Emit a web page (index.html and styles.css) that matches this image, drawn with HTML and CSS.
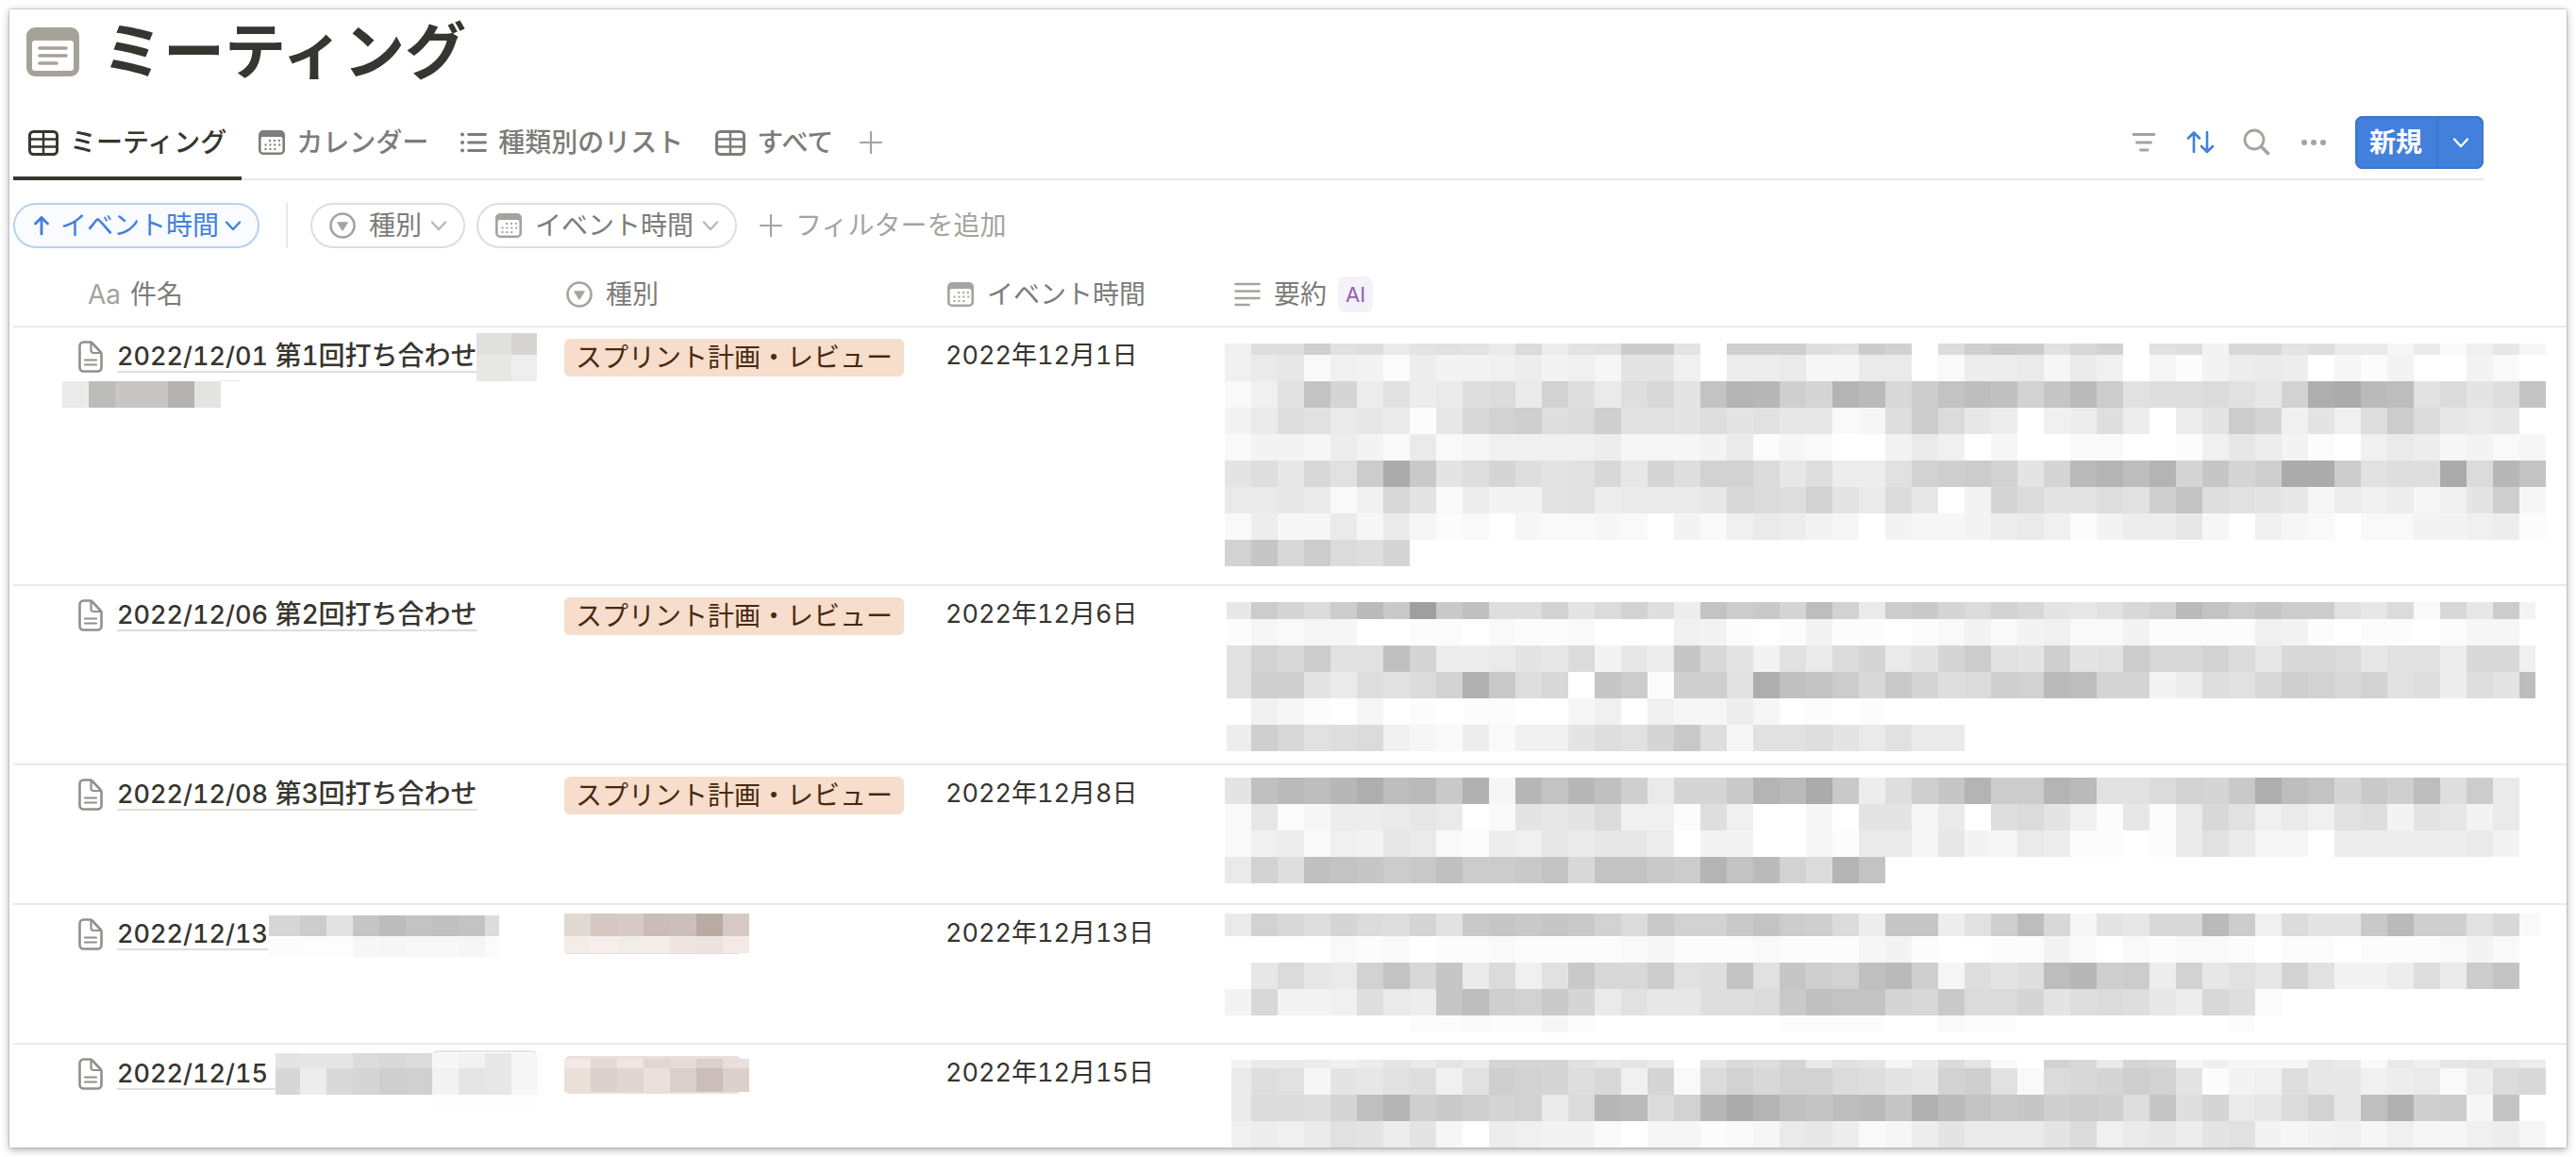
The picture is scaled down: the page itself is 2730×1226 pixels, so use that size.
FILE: index.html
```html
<!DOCTYPE html>
<html lang="ja">
<head>
<meta charset="utf-8">
<meta name="viewport" content="width=device-width, initial-scale=1">
<title>ミーティング</title>
<link rel="stylesheet" href="styles.css">
</head>
<body>
<svg class="defs" aria-hidden="true">
  <symbol id="i-table" viewBox="0 0 32 28">
    <rect x="1.5" y="2.5" width="29" height="24" rx="4" fill="none" stroke="currentColor" stroke-width="3"/>
    <path d="M2 10.5h28M2 18.5h28M16 3v23" fill="none" stroke="currentColor" stroke-width="2.4"/>
  </symbol>
  <symbol id="i-calendar" viewBox="0 0 28 28">
    <path fill="currentColor" fill-rule="evenodd" d="M5 1h18a5 5 0 0 1 5 5v16a5 5 0 0 1-5 5H5a5 5 0 0 1-5-5V6a5 5 0 0 1 5-5zM2.600 10v12a2.600 2.600 0 0 0 2.600 2.600h17.600a2.600 2.600 0 0 0 2.600-2.600V10a2 2 0 0 0-2-2H4.600a2 2 0 0 0-2 2z"/>
    <path d="M11 12h13M6.500 16.500h17M6.500 21h12.500" stroke="currentColor" stroke-width="2.200" stroke-dasharray="2 2.900" fill="none"/>
  </symbol>
  <symbol id="i-list" viewBox="0 0 28 28">
    <circle cx="2" cy="5.500" r="2" fill="currentColor"/><circle cx="2" cy="14" r="2" fill="currentColor"/><circle cx="2" cy="22.500" r="2" fill="currentColor"/>
    <path d="M8.500 5.500h18M8.500 14h18M8.500 22.500h18" stroke="currentColor" stroke-width="2.800" stroke-linecap="round"/>
  </symbol>
  <symbol id="i-plus" viewBox="0 0 24 24">
    <path d="M12 1v22M1 12h22" stroke="currentColor" stroke-width="2.200" stroke-linecap="round"/>
  </symbol>
  <symbol id="i-select" viewBox="0 0 28 28">
    <circle cx="14" cy="14" r="12.500" fill="none" stroke="currentColor" stroke-width="2.600"/>
    <path d="M8.800 10.200h10.400a.6.6 0 0 1 .5.9l-5 8.200a.8.8 0 0 1-1.400 0l-5-8.200a.6.6 0 0 1 .5-.9z" fill="currentColor"/>
  </symbol>
  <symbol id="i-chevron" viewBox="0 0 18 18">
    <path d="M2 5.500l7 7.500 7-7.500" fill="none" stroke="currentColor" stroke-width="2.400" stroke-linecap="round" stroke-linejoin="round"/>
  </symbol>
  <symbol id="i-page" viewBox="0 0 26 34">
    <path d="M5 1.500h7.500a3 3 0 0 1 2.200 1L23.600 12a3 3 0 0 1 .9 2.200V28.500a4 4 0 0 1-4 4H5.500a4 4 0 0 1-4-4V5.500a4 4 0 0 1 4-4z" fill="none" stroke="currentColor" stroke-width="2.600"/>
    <path d="M13.500 2v8.500a2.500 2.500 0 0 0 2.500 2.500h8M7 20.500h12M7 25.500h12" fill="none" stroke="currentColor" stroke-width="2.200" stroke-linecap="round"/>
  </symbol>
</svg>

<main class="frame">
  <header class="page-title">
    <svg class="page-icon" viewBox="0 0 56 52" aria-hidden="true">
      <path fill="#a5a299" fill-rule="evenodd" d="M9 0h38a9 9 0 0 1 9 9v34a9 9 0 0 1-9 9H9a9 9 0 0 1-9-9V9a9 9 0 0 1 9-9zM6 17v26a3 3 0 0 0 3 3h38a3 3 0 0 0 3-3V17a3 3 0 0 0-3-3H9a3 3 0 0 0-3 3z"/>
      <path d="M14 22h28M14 30h28M14 38h18" stroke="#a5a299" stroke-width="3.600" stroke-linecap="round"/>
    </svg>
    <h1>ミーティング</h1>
  </header>

  <div class="viewbar">
    <nav class="tabs">
      <a class="tab tab-active" href="#" aria-current="page"><svg class="w32"><use href="#i-table"/></svg>ミーティング</a>
      <a class="tab" href="#"><svg class="w28"><use href="#i-calendar"/></svg>カレンダー</a>
      <a class="tab" href="#"><svg class="w28"><use href="#i-list"/></svg>種類別のリスト</a>
      <a class="tab" href="#"><svg class="w32"><use href="#i-table"/></svg>すべて</a>
      <button class="add-tab" type="button" aria-label="ビューを追加"><svg class="w24"><use href="#i-plus"/></svg></button>
    </nav>
    <div class="tools">
      <button class="tool" type="button" aria-label="フィルター"><svg viewBox="0 0 32 32"><path d="M5 7.500h22M8.500 16h15M12.500 24h7.500" stroke="currentColor" stroke-width="2.800" stroke-linecap="round"/></svg></button>
      <button class="tool tool-on" type="button" aria-label="並べ替え"><svg viewBox="0 0 32 32"><path d="M9 26V5.500M3 11.500l6-6 6 6M23 5v21M17 20l6 6 6-6" fill="none" stroke="currentColor" stroke-width="2.600" stroke-linecap="round" stroke-linejoin="round"/></svg></button>
      <button class="tool" type="button" aria-label="検索"><svg viewBox="0 0 32 32"><circle cx="13" cy="13" r="10" fill="none" stroke="currentColor" stroke-width="2.800"/><path d="M20.500 20.500l7 7" stroke="currentColor" stroke-width="3.600" stroke-linecap="round"/></svg></button>
      <button class="tool" type="button" aria-label="その他"><svg viewBox="0 0 32 32"><g fill="currentColor"><circle cx="6" cy="16" r="3"/><circle cx="16" cy="16" r="3"/><circle cx="26" cy="16" r="3"/></g></svg></button>
      <div class="new">
        <button class="new-main" type="button">新規</button>
        <button class="new-more" type="button" aria-label="テンプレート"><svg class="w18"><use href="#i-chevron"/></svg></button>
      </div>
    </div>
  </div>

  <div class="filters">
    <button class="pill pill-sort" type="button"><svg class="arrow" viewBox="0 0 16 22"><path d="M8 20V2.500M1.500 9L8 2.500 14.500 9" fill="none" stroke="currentColor" stroke-width="2.800" stroke-linecap="round" stroke-linejoin="round"/></svg>イベント時間<svg class="w18 chev"><use href="#i-chevron"/></svg></button>
    <span class="rule"></span>
    <button class="pill" type="button"><svg class="w28 kind"><use href="#i-select"/></svg>種別<svg class="w18 chev"><use href="#i-chevron"/></svg></button>
    <button class="pill" type="button"><svg class="w28 kind"><use href="#i-calendar"/></svg>イベント時間<svg class="w18 chev"><use href="#i-chevron"/></svg></button>
    <button class="add-filter" type="button"><svg class="w24"><use href="#i-plus"/></svg>フィルターを追加</button>
  </div>

  <table class="db">
    <colgroup><col class="c-name"><col class="c-type"><col class="c-date"><col></colgroup>
    <thead>
      <tr>
        <th class="h-name"><span class="head"><span class="aa">Aa</span>件名</span></th>
        <th class="h-type"><span class="head"><svg class="w28"><use href="#i-select"/></svg>種別</span></th>
        <th class="h-date"><span class="head"><svg class="w28"><use href="#i-calendar"/></svg>イベント時間</span></th>
        <th class="h-sum"><span class="head"><svg class="w28" viewBox="0 0 28 28"><path d="M1.500 3h25M1.500 10.500h25M1.500 18h25M1.500 25h14" stroke="currentColor" stroke-width="2.600" stroke-linecap="round"/></svg>要約<span class="ai">AI</span></span></th>
      </tr>
    </thead>
    <tbody>
      <tr>
        <td class="name"><svg class="page"><use href="#i-page"/></svg><a href="#"><time>2022/12/01</time> 第1回打ち合わせ</a><svg class="mask" data-mask="name1"></svg></td>
        <td><span class="tag">スプリント計画・レビュー</span></td>
        <td class="date">2022年12月1日</td>
        <td><svg class="mosaic" data-mosaic="0"></svg></td>
      </tr>
      <tr>
        <td class="name"><svg class="page"><use href="#i-page"/></svg><a href="#"><time>2022/12/06</time> 第2回打ち合わせ</a></td>
        <td><span class="tag">スプリント計画・レビュー</span></td>
        <td class="date">2022年12月6日</td>
        <td><svg class="mosaic" data-mosaic="1"></svg></td>
      </tr>
      <tr>
        <td class="name"><svg class="page"><use href="#i-page"/></svg><a href="#"><time>2022/12/08</time> 第3回打ち合わせ</a></td>
        <td><span class="tag">スプリント計画・レビュー</span></td>
        <td class="date">2022年12月8日</td>
        <td><svg class="mosaic" data-mosaic="2"></svg></td>
      </tr>
      <tr>
        <td class="name"><svg class="page"><use href="#i-page"/></svg><a href="#"><time>2022/12/13</time></a><svg class="mask" data-mask="name4"></svg></td>
        <td><svg class="mask-tag" data-mask="type4"></svg></td>
        <td class="date">2022年12月13日</td>
        <td><svg class="mosaic" data-mosaic="3"></svg></td>
      </tr>
      <tr>
        <td class="name"><svg class="page"><use href="#i-page"/></svg><a href="#"><time>2022/12/15</time>&nbsp;</a><svg class="mask" data-mask="name5"></svg></td>
        <td><svg class="mask-tag" data-mask="type5"></svg></td>
        <td class="date">2022年12月15日</td>
        <td><svg class="mosaic" data-mosaic="4"></svg></td>
      </tr>
    </tbody>
  </table>
</main>
<script src="mosaic.js"></script>
</body>
</html>
```
FILE: styles.css
```css
* { box-sizing: border-box; }
body {
  margin: 0;
  padding: 10px;
  background: #fff;
  color: #37352f;
  font-family: Inter, "Noto Sans CJK JP", sans-serif;
  font-size: 28px;
  line-height: 42px;
}
svg { display: block; flex: none; }
button {
  margin: 0;
  padding: 0;
  border: 0;
  background: none;
  color: inherit;
  font: inherit;
  white-space: nowrap;
}
a { color: inherit; text-decoration: none; }
.defs { position: absolute; width: 0; height: 0; }
.w18 { width: 18px; height: 18px; }
.w24 { width: 24px; height: 24px; }
.w28 { width: 28px; height: 28px; }
.w32 { width: 32px; height: 28px; }

.frame {
  min-height: calc(100vh - 20px);
  padding-left: 4px;
  background: #fff;
  box-shadow: 0 0 2px #999, 0 2px 8px #aaa;
}

.page-title {
  display: flex;
  align-items: center;
  gap: 24px;
  height: 101px;
  padding: 0 14px 12px;
}
.page-icon { width: 56px; height: 52px; }
h1 { margin: 0; font-size: 65px; line-height: 80px; font-weight: 700; }

.viewbar {
  display: flex;
  justify-content: space-between;
  height: 80px;
  margin-right: 88px;
  box-shadow: inset 0 -2px #e9e9e7;
}
.tabs { display: flex; gap: 2px; }
.tab {
  display: flex;
  align-items: center;
  gap: 12px;
  padding: 0 16px;
  color: #7d7c78;
  font-weight: 500;
  white-space: nowrap;
}
.tab-active { color: #37352f; box-shadow: inset 0 -4px #37352f; }
.add-tab { padding: 0 10px; color: #a5a39e; }
.tools { display: flex; align-items: center; gap: 28px; color: #a5a39e; }
.tool svg { width: 32px; height: 32px; }
.tool-on { color: #4280db; }
.new {
  display: flex;
  height: 56px;
  border-radius: 8px;
  background: #4280db;
  color: #fff;
  box-shadow: inset 0 0 0 2px #3c76cb;
}
.new-main { padding: 0 15px; font-weight: 700; }
.new-more { display: flex; align-items: center; padding: 0 15px; border-left: 2px solid #3c76cb; }

.filters { display: flex; align-items: center; padding-top: 24px; }
.pill {
  display: flex;
  align-items: center;
  height: 48px;
  margin-right: 12px;
  padding: 0 17px 0 18px;
  border: 2px solid #dededc;
  border-radius: 24px;
  color: #7d7c78;
}
.pill .kind { margin-right: 14px; color: #a5a39e; }
.pill .chev { margin-left: 9px; color: #b8b7b3; }
.pill-sort { margin-right: 28px; padding-left: 20px; border-color: #b9d1f3; background: #f9fbff; color: #4280db; }
.pill-sort .arrow { width: 16px; height: 22px; margin-right: 12px; }
.pill-sort .chev { margin-left: 6px; color: #4280db; }
.rule { width: 2px; height: 48px; margin-right: 24px; background: #e9e9e7; }
.add-filter { display: flex; align-items: center; gap: 14px; padding: 0 12px; color: #a5a39e; }

.db {
  width: 100%;
  margin-top: 12px;
  border-collapse: separate;
  border-spacing: 0;
  table-layout: fixed;
  font-variant-numeric: tabular-nums;
}
.c-name { width: 572px; }
.c-type { width: 406px; }
.c-date { width: 294px; }
th {
  height: 72px;
  padding: 3px 0 0 14px;
  border-bottom: 2px solid #e9e9e7;
  color: #7d7c78;
  font-weight: 400;
  text-align: left;
}
.head { display: flex; align-items: center; gap: 14px; white-space: nowrap; }
.head svg { color: #a5a39e; }
.h-name { padding-left: 79px; }
.h-name .head { gap: 10px; }
.h-date { padding-left: 12px; }
.h-sum { padding-left: 22px; }
.aa { color: #a5a39e; }
.ai {
  margin-left: -2px;
  padding: 0 8px;
  border-radius: 8px;
  background: #f4f1f8;
  color: #8e63b0;
  font-size: 22px;
  line-height: 38px;
}
td {
  padding: 9px 0 11px 12px;
  border-bottom: 2px solid #e9e9e7;
  vertical-align: top;
  white-space: nowrap;
}
tr:last-child td { padding-bottom: 0; border-bottom: 0; }
.name { position: relative; padding-left: 69px; font-weight: 500; }
.date { padding-left: 10px; }
.date, time { font-size: 27px; }
.page { display: inline-block; width: 26px; height: 34px; margin-right: 15px; color: #91908c; vertical-align: -8px; }
.name a { text-decoration: underline #dededc 2px; text-underline-offset: 6px; }
.tag {
  display: inline-block;
  margin-top: 3px;
  padding: 0 12px;
  border-radius: 6px;
  background: #f6ddcc;
  color: #49290e;
  line-height: 40px;
  vertical-align: top;
}
.mask { position: absolute; left: 0; top: 0; width: 572px; height: 90px; }
.mask-tag { width: 200px; height: 52px; }
.mosaic { width: 1400px; }
```
FILE: mosaic.js
```javascript
// Redaction blocks. Each character is a grey step: 0 is white, z the darkest.
const CELL = 28;
const SVG = "http://www.w3.org/2000/svg";

const blocks = [
  { height: 252, top: 8, left: 0, right: 1400, rows: [
    [12, "5bbgab79a97c69ahh90gggbahf0cgihadf0ab4dd9b77372583"],
    [28, "57825416445645399506673377026673750314676031400420"],
    [28, "25ake6a67bc7fb7bd9kpogepndhkmlfjnhabbca8frsnmac9bk"],
    [28, "47ba78718dfgbcgaa9b9a8823bhc86056b6069he595bhc8780"],
    [28, "24436427235555633347132004750300220015864105763423"],
    [28, "9b8dahsi9beb9ad8ebffc8b66afghf9enpmpejegsshabbscok"],
    [28, "778725d926449a67778dcbf97c804ec99bagkba983656359g3"],
    [28, "26337373120322320425764304334675146683053202244561"],
    [28, "fjdhcbe"]
  ]},
  { height: 168, top: 8, left: 2, right: 1389, rows: [
    [18, "8hechniwilbbf9cfb6khiemf7hiecfd98adfnkhjhha8c2d8h4"],
    [28, "13233001102112000541014110124245224111154101101330"],
    [28, "afdhaale66798c486jd94a7ce79eha9g9ahddfc8ddc8aa6dd5"],
    [28, "agg97bacfqibd0jh1ggarlkhdiebcgfnmee46badgfdfab6b9m"],
    [28, "0531030101100350533630101"],
    [28, "6gdabc53262559baeib3aab97a77"]
  ]},
  { height: 126, top: 4, left: 0, right: 1372, rows: [
    [28, "9lnmormniq3okolg7eeipnsi6bgjphhpnaacfeirmkeigmbh7"],
    [28, "28136678702989c551b5003099370bc951817da575ab49847"],
    [28, "2562548721658788604400317738437611017a73306666674"],
    [28, "7fblkjhilhhikdkkihpknfcpk"]
  ]},
  { height: 126, top: 0, left: 0, right: 1394, rows: [
    [24, "7fdbecbeaijijifciffikhgc6jj6agmd398ddnh5c99inggad2"],
    [28, "0000212011211112311121113410011420212210110111242"],
    [28, "08c87fkdj7c5aiddhabkajgflng3b9bmogh6f8a8fa446b7hk"],
    [28, "4d445b76jmgfie7a88bbcilkkedicce9bcb86db1"],
    [22, "000000011211310000000111100211000000001"]
  ]},
  { height: 100, top: 7, left: 7, right: 1400, rows: [
    [9, "4776569797eeea89709cbe7a937c920fd7ed35333872758986"],
    [28, "7ba398ab5agfebd5e2cfdffcb98fga2cdegf9145b8856726cd"],
    [28, "7ccbelpgigef7concfosplkmnjqnkijghgbjbe78cf8lqgh3k0"],
    [28, "5657a969306544203312378623697779c57869a43453533563"]
  ]}
];

// Named masks: [x, y, width, height, colour, radius]
const masks = {
  name1: [
    [491, 6, 37, 23, "#e0e0df"], [528, 6, 27, 23, "#d6d5d3"],
    [491, 29, 37, 28, "#e7e7e5"], [528, 29, 27, 28, "#eee"],
    [220, 56, 20, 1, "#e9e9e7"],
    [52, 57, 28, 28, "#ebebeb"], [80, 57, 28, 28, "#bcbcba"], [108, 57, 56, 28, "#c7c6c4"],
    [164, 57, 28, 28, "#b3b2b0"], [192, 57, 28, 28, "#e4e4e2"]
  ],
  name4: strip(271, 11, 22, [33, 28, 28, 28, 28, 28, 28, 28, 15], "d6cce2c5bcc3c0c3dc")
    .concat(strip(271, 33, 22, [33, 28, 28, 28, 28, 28, 28, 28, 15], "fcfdfdf7f6f8f8f6fb")),
  name5: [[444, 6, 111, 12, "#e4e4e2", 6], [445, 8, 109, 12, "#fff", 5]]
    .concat(strip(278, 9, 16, [26, 28, 28, 28, 28, 28, 28, 28, 28, 28, 6], "e4e6e6dbd8dbf7f2e7f7fd"))
    .concat(strip(278, 25, 28, [26, 28, 28, 28, 28, 28, 28, 28, 28, 28, 6], "d7edd9d5cfd0f2e5e7f7fd"))
    .concat([[444, 53, 111, 19, "#fdfdfd"]]),
  type4: [[2, 40, 184, 3, "#e9dcd6", 2]]
    .concat(tint(0, 24, ["e1d8d1", "d5c8c3", "d7cac5", "cabdb8", "ccbfbb", "b9aba2", "d6c9c4"]))
    .concat(tint(24, 18, ["f3ede9", "f6eeec", "f1ede9", "f3eeea", "efe6e3", "ece3e0", "f3e9e7"])),
  type5: [[0, 3, 188, 40, "#eadfd9", 6]]
    .concat(tint(6, 10, ["f3e9e7", "e3d9d6", "efe5e2", "e1d7d2", "e6dbd7", "dbd0cb", "e8dedb"]))
    .concat(tint(16, 25, ["ebdfda", "dbd0cb", "e2d6d2", "ebe0dc", "dacfca", "cbbdb9", "dcd0ca"]))
};

function strip(x, y, height, widths, greys) {
  return widths.map((width, i) => {
    const g = greys.slice(i * 2, i * 2 + 2);
    const cell = [x, y, width, height, "#" + g + g + g];
    x += width;
    return cell;
  });
}

function tint(y, height, colours) {
  return colours.map((c, i) => [i * CELL, y, CELL, height, "#" + c]);
}

function draw(svg, x, y, width, height, fill, radius) {
  const rect = document.createElementNS(SVG, "rect");
  const attrs = { x, y, width, height, fill, rx: radius || 0 };
  for (const key in attrs) rect.setAttribute(key, attrs[key]);
  svg.appendChild(rect);
}

document.querySelectorAll("[data-mosaic]").forEach(svg => {
  const block = blocks[svg.dataset.mosaic];
  svg.setAttribute("height", block.height);
  let y = block.top;
  for (const [height, levels] of block.rows) {
    [...levels].forEach((level, i) => {
      const x = Math.max(i * CELL, block.left);
      const end = Math.min((i + 1) * CELL, block.right);
      const grey = 255 - 3 * parseInt(level, 36);
      draw(svg, x, y, end - x, height, `rgb(${grey},${grey},${grey})`);
    });
    y += height;
  }
});

document.querySelectorAll("[data-mask]").forEach(svg => {
  masks[svg.dataset.mask].forEach(cell => draw(svg, ...cell));
});
```
